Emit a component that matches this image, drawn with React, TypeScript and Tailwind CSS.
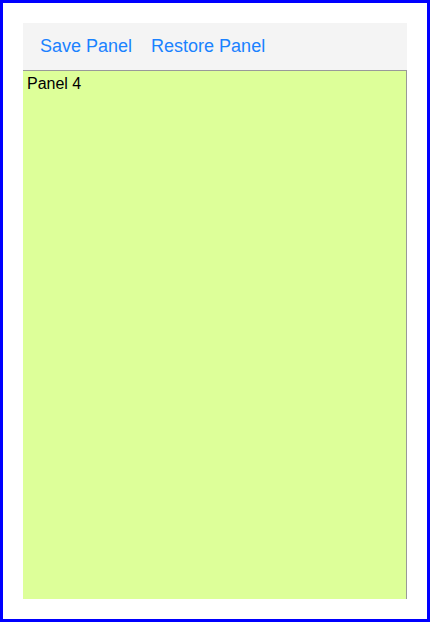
import React from "react";

export default function App() {
  return (
    <div className="h-[622px] w-[430px] border-[3px] border-[#0000ff] bg-white p-5 font-['Liberation_Sans',Arial,sans-serif]">
      <div className="flex h-full flex-col">
        <div className="flex h-[47px] shrink-0 items-center gap-[19px] bg-[#f4f4f4] pl-[17px]">
          <button className="text-[18px] text-[#1a82ff]">Save Panel</button>
          <button className="text-[18px] text-[#1a82ff]">Restore Panel</button>
        </div>
        <div className="flex-1 border-t border-r border-[#999999] bg-[#ddff99] px-1 pt-[1px] text-[16px] text-black">
          Panel 4
        </div>
      </div>
    </div>
  );
}
